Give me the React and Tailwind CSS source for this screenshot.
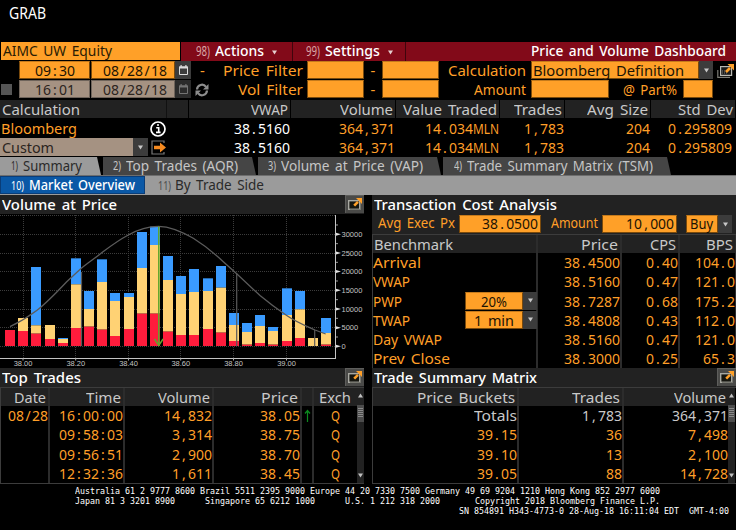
import React, { useLayoutEffect, useRef } from "react";

// Condensed text: the glyphs are narrowed so that the run fills a given width.
function T({ w, children, className = "" }) {
  const ref = useRef(null);
  useLayoutEffect(() => {
    const el = ref.current;
    el.style.transform = "none";
    el.style.transform = `scaleX(${w / el.getBoundingClientRect().width})`;
  }, [w, children]);
  return (
    <span className={`inline-block whitespace-pre text-left ${className}`} style={{ width: w }}>
      <span ref={ref} className="inline-block origin-left">{children}</span>
    </span>
  );
}

// Tabular figures: separators take a full digit cell, eight pixels each.
function N({ children, className = "" }) {
  return (
    <T w={children.length * 8} className={className}>
      {children.split(/([.,:/])/).map((p, i) =>
        p === "/" ? (
          <span key={i} className="px-[1.5px]">{p}</span>
        ) : /^[.,:]$/.test(p) ? (
          <span key={i} className="px-[2.28px]">{p}</span>
        ) : (
          p
        )
      )}
    </T>
  );
}

const Caret = ({ className = "" }) => (
  <svg width="7" height="5" viewBox="0 0 7 5" className={className}>
    <path d="M1 0.5h5L3.5 4.5z" fill="currentColor" />
  </svg>
);

const Drop = ({ className = "" }) => (
  <span className={`flex h-[18px] shrink-0 items-center justify-center bg-[#3c3c3c] text-[#c8c8c8] ${className}`}>
    <Caret />
  </span>
);

const Popout = () => (
  <svg width="19" height="18" viewBox="0 0 19 18" className="shrink-0">
    <rect width="19" height="18" fill="#4a4a48" />
    <path d="M0 0h19v1H1v17H0z" fill="#5e5e5c" />
    <rect x="3.7" y="5.7" width="11" height="8.6" fill="#16160f" stroke="#a9a9a2" strokeWidth="1.4" />
    <path d="M5 14.5h10.5V8" fill="none" stroke="#77776f" strokeWidth="1" />
    <path d="M9.2 10.6L13 6.8" stroke="#ffa028" strokeWidth="2.6" />
    <path d="M11 3h6v6z" fill="#ffa028" />
  </svg>
);

const Calendar = ({ dim }) => (
  <span className={`flex h-[18px] w-[16px] items-center justify-center ${dim ? "bg-[#2b2b2b] text-[#747474]" : "bg-[#3c3c3c] text-[#dcdcdc]"}`}>
    <svg width="11" height="12" viewBox="0 0 11 12">
      <path d="M1.5 3v7.5h8V3z" fill="none" stroke="currentColor" />
      <path d="M1 2.5h9v2H1zM2.5 1h1.2v2H2.5zM7.3 1h1.2v2H7.3z" fill="currentColor" />
    </svg>
  </span>
);

const Box = ({ className = "", children }) => (
  <span className={`block h-[18px] shrink-0 border border-[#7a4a0c] border-t-[#c47a1c] bg-[#ffa028] leading-[16px] text-[#1c1404] ${className}`}>
    {children}
  </span>
);

const summaryCols = "grid grid-cols-[167px_22px_102px_105px_104px_65px_86px_85px]";

function Header() {
  return (
    <div className="flex h-[19px] pl-px">
      <div className="h-[18px] w-[179px] bg-[#ffa028] pl-[2px] leading-[17px] text-[#2a1c04]">
        <T w={109}>AIMC UW Equity</T>
      </div>
      <div className="ml-px flex h-[19px] flex-1 bg-[#820a19] leading-[17px] text-white">
        <div className="flex w-[112px] border-r border-[#3f050c] pl-[15px]">
          <T w={14} className="text-[14px] text-[#d9a4a4]">98)</T>
          <T w={49} className="ml-[5px] font-medium">Actions</T>
          <Caret className="mt-[8px] ml-[7px] text-[#e6d0d0]" />
        </div>
        <div className="flex w-[113px] border-r border-[#3f050c] pl-[13px]">
          <T w={14} className="text-[14px] text-[#d9a4a4]">99)</T>
          <T w={55} className="ml-[5px] font-medium">Settings</T>
          <Caret className="mt-[8px] ml-[7px] text-[#e6d0d0]" />
        </div>
        <div className="flex-1 pr-[10px] text-right">
          <T w={195} className="font-medium">Price and Volume Dashboard</T>
        </div>
      </div>
    </div>
  );
}

function Filters() {
  return (
    <div className="h-[38px] leading-[18px] text-[#ff9f28]">
      <div className="flex h-[19px]">
        <Box className="ml-[19px] w-[71px] text-center"><N>09:30</N></Box>
        <Box className="ml-px w-[84px] pr-[7px] text-right"><N>08/28/18</N></Box>
        <Calendar />
        <span className="ml-[9px] w-[7px]">-</span>
        <span className="w-[96px] text-right"><T w={80}>Price Filter</T></span>
        <Box className="ml-[4px] w-[57px]" />
        <span className="w-[18px] text-center">-</span>
        <Box className="w-[57px]" />
        <span className="w-[87px] text-right"><T w={78}>Calculation</T></span>
        <Box className="ml-[5px] w-[168px] pl-px"><T w={151}>Bloomberg Definition</T></Box>
        <Drop className="w-[14px]" />
        <svg width="18" height="15" viewBox="0 0 18 15" className="ml-[4px] mt-[3px]">
          <rect x="3.6" y="2.6" width="11" height="8.8" fill="#1c1c1c" stroke="#b9b9b2" strokeWidth="1.2" />
          <path d="M0.8 6v7.4H13" fill="none" stroke="#7b7b75" strokeWidth="1.2" />
          <path d="M5 7h6M5 9h6" stroke="#777" strokeDasharray="1 1" />
          <path d="M9 8l4-4" stroke="#ffa028" strokeWidth="2.6" />
          <path d="M10.5 0H17v6.5z" fill="#ffa028" />
        </svg>
      </div>
      <div className="flex h-[19px]">
        <span className="mt-[4px] ml-px h-[11px] w-[11px] bg-[#555]" />
        <span className="ml-[7px] h-[18px] w-[71px] border border-[#6f645b] bg-[#a59282] text-center leading-[16px] text-[#2b241e]"><N>16:01</N></span>
        <span className="ml-px h-[18px] w-[84px] border border-[#6f645b] bg-[#a59282] pr-[7px] text-right leading-[16px] text-[#2b241e]"><N>08/28/18</N></span>
        <Calendar dim />
        <svg width="14" height="14" viewBox="0 0 14 14" className="ml-[4px] mt-[3px]">
          <path d="M2 6.5A5 5 0 0 1 11 3.8M12 7.5A5 5 0 0 1 3 10.2" fill="none" stroke="#8d8d8d" strokeWidth="2.2" />
          <path d="M13.5 1v5.5H8zM0.5 13V7.5H6z" fill="#8d8d8d" />
        </svg>
        <span className="w-[95px] pr-px text-right"><T w={65}>Vol Filter</T></span>
        <Box className="ml-[3px] w-[57px]" />
        <span className="w-[18px] text-center">-</span>
        <Box className="w-[57px]" />
        <span className="w-[87px] text-right"><T w={52}>Amount</T></span>
        <Box className="ml-[5px] w-[78px]" />
        <span className="w-[74px] pr-[6px] text-right"><T w={54}>@ Part%</T></span>
        <Box className="w-[30px]" />
      </div>
    </div>
  );
}

function Summary() {
  const head = [["VWAP", 37], ["Volume", 53], ["Value Traded", 94], ["Trades", 48], ["Avg Size", 61], ["Std Dev", 55]];
  return (
    <div>
      <div className={`${summaryCols} h-[20px] border-y border-black leading-[18px] text-[#c9c9c9]`}>
        <div className="border-r border-[#111] bg-[#222] pl-[2px]"><T w={78}>Calculation</T></div>
        <div className="border-r border-black bg-[#222]" />
        {head.map(([h, w]) => (
          <div key={h} className="border-r border-black bg-[#222] pr-[2px] text-right"><T w={w}>{h}</T></div>
        ))}
      </div>
      {["Bloomberg", "Custom"].map((name, i) => (
        <div key={name} className={`${summaryCols} h-[19px] text-right leading-[19px] text-[#ff9f28]`}>
          {i === 0 ? (
            <>
              <div className="pl-px text-left"><T w={76}>{name}</T></div>
              <div className="-ml-[17px]">
                <svg width="16" height="16" viewBox="0 0 16 16" className="mt-[2px]">
                  <circle cx="8" cy="8" r="7" fill="none" stroke="#fff" strokeWidth="1.7" />
                  <path d="M6.2 6.8h2.5V11.4M6 11.4h4.6M7 4h2" fill="none" stroke="#fff" strokeWidth="1.6" />
                </svg>
              </div>
            </>
          ) : (
            <>
              <div className="flex">
                <span className="h-[18px] w-[133px] bg-[#a59282] pl-[2px] text-left leading-[18px] text-[#2b241e]"><T w={52}>{name}</T></span>
                <Drop className="w-[15px] text-[#888]" />
              </div>
              <div className="-ml-[16px]">
                <svg width="16" height="15" viewBox="0 0 16 15" className="mt-[2px]">
                  <path d="M13 3V1H1v13h12v-2" fill="none" stroke="#777" strokeWidth="1.2" />
                  <path d="M3 5.8h6V2.6L15 7.5 9 12.4V9.2H3z" fill="#f58a20" />
                </svg>
              </div>
            </>
          )}
          <div className="pr-px text-white"><N>38.5160</N></div>
          <div className="pr-px"><N>364,371</N></div>
          <div className="pr-px"><N>14.034</N><T w={26}>MLN</T></div>
          <div className="pr-px"><N>1,783</N></div>
          <div className="pr-px"><N>204</N></div>
          <div className="pr-[4px]"><N>0.295809</N></div>
        </div>
      ))}
    </div>
  );
}

function Tabs() {
  const tabs = [
    ["1)", "Summary", 59, "w-[101px] bg-[#9b9b9b] text-[#2a2a2a]", "pl-[11px]", 7],
    ["2)", "Top Trades (AQR)", 112, "ml-[2px] w-[153px] bg-[#454545] text-[#c6c6c6]", "pl-[10px]", 8],
    ["3)", "Volume at Price (VAP)", 142, "ml-[2px] w-[183px] bg-[#454545] text-[#c6c6c6]", "pl-[10px]", 8],
    ["4)", "Trade Summary Matrix (TSM)", 186, "ml-[2px] w-[228px] bg-[#454545] text-[#c6c6c6]", "pl-[11px]", 8],
  ];
  return (
    <>
      <div className="flex h-[18px] leading-[18px]">
        {tabs.map(([n, t, w, c, p, nw]) => (
          <div key={n} className={`${c} ${p} flex [clip-path:polygon(0_0,calc(100%-4px)_0,100%_100%,0_100%)] text-[14px]`}>
            <T w={nw} className="text-[12px]">{n}</T>
            <T w={w} className="ml-[5px]">{t}</T>
          </div>
        ))}
      </div>
      <div className="flex h-[20px] border-t border-[#6e6e6e] bg-[#9b9b9b] text-[14px] leading-[18px] text-[#2a2a2a]">
        <div className="flex h-[18px] w-[145px] border border-[#0a3d78] bg-[#0a58a6] pl-[10px] leading-[16px] text-white">
          <T w={13} className="text-[13px]">10)</T>
          <T w={106} className="ml-[5px] font-medium">Market Overview</T>
        </div>
        <T w={13} className="ml-[13px] text-[13px] text-[#4a4a4a]">11)</T>
        <T w={89} className="ml-[4px]">By Trade Side</T>
      </div>
    </>
  );
}

// [top of blue, top of yellow, top of red] in thirds of a pixel, base at 453.
const bars = [
  [405, 405, 405], [369, 369, 408], [216, 391, 416], [390, 390, 432], [429, 432, 444],
  [190, 268, 399], [288, 342, 395], [193, 261, 404], [294, 318, 423], [294, 306, 402],
  [111, 219, 356], [95, 150, 356], [183, 255, 410], [243, 297, 420], [222, 291, 420],
  [250, 288, 402], [213, 278, 413], [354, 390, 438], [384, 411, 449], [360, 393, 444],
  [396, 408, 449], [280, 360, 438], [288, 343, 429], [429, 429, 453], [369, 414, 449],
];

function Chart() {
  const y = (v) => v / 3 - 19;
  const xs = [23, 75.7, 128.5, 180.7, 233.5, 286.5];
  const ys = [0, 5000, 10000, 15000, 20000, 25000, 30000];
  return (
    <svg width="364" height="154" viewBox="0 0 364 154" className="block bg-black">
      {ys.map((v) => (
        <line key={v} x1="0" x2="335" y1={Math.round(132 - (v * 18.67) / 5000) + 0.5} y2={Math.round(132 - (v * 18.67) / 5000) + 0.5} stroke="#3c3c3c" strokeDasharray="1 1" />
      ))}
      <line x1="0" x2="335" y1="1.5" y2="1.5" stroke="#3c3c3c" strokeDasharray="1 1" />
      {xs.map((x) => (
        <line key={x} x1={Math.floor(x) + 0.5} x2={Math.floor(x) + 0.5} y1="1" y2="144" stroke="#3c3c3c" strokeDasharray="1 1" />
      ))}
      {bars.map(([b, w, r], i) => {
        const x = Math.round(5 + i * 13.17);
        return (
          <g key={i}>
            <rect x={x} y={y(b)} width="10" height={(w - b) / 3} fill="#3a9bff" />
            <rect x={x} y={y(w)} width="10" height={(r - w) / 3} fill="#ffd274" />
            <rect x={x} y={y(r)} width="10" height={(453 - r) / 3} fill="#ff1c3c" />
          </g>
        );
      })}
      <path d="M81.5 58V132M236.7 59.5V132M314.7 116V132" stroke="#5a5a5a" strokeWidth="1.2" />
      <path
        d="M10 112.7C19 108.5 28 103 36.7 96.5C47 88.5 57 78 66.7 67.7L81 54.5C89 48 96 43.5 103.3 37.6C112 31 120 25.4 128.3 21C137 16 148 12.3 158.5 12.3C169 12.5 181 17 193.3 24.3C204 31 214 39 223.3 47.7L236.7 59.8L260 81.5C269 89 277 95 286.7 101.5C296 108 306 112 315 116L325.7 120"
        fill="none" stroke="#5c5c5c" strokeWidth="1.3"
      />
      <path d="M158.8 12.5V131M154.5 125l4.3 6.5 4.3-6.5" fill="none" stroke="#5fa62c" strokeWidth="1.5" />
      <path d="M335.5 1V144.5M0 144.5H336" fill="none" stroke="#c4c4c4" />
      {ys.map((v) => {
        const p = 132.3 - (v * 18.67) / 5000;
        return (
          <g key={v}>
            <path d={`M336 ${p - 1.5}l5 1.5-5 1.5z`} fill="#e0e0e0" />
            <path d={`M336 ${p - 9.3}h2`} stroke="#999" />
            <text x="341.5" y={p + 2.7} fontSize="7.5" fill="#c4c4c4" fontFamily="Liberation Sans, sans-serif">{v}</text>
          </g>
        );
      })}
      {["38.00", "38.20", "38.40", "38.60", "38.80", "39.00"].map((l, i) => (
        <g key={l}>
          <path d={`M${xs[i]} 144v2.5`} stroke="#aaa" />
          <text x={xs[i] - 9.3} y="151.6" fontSize="7.5" fill="#c4c4c4" fontFamily="Liberation Sans, sans-serif">{l}</text>
        </g>
      ))}
    </svg>
  );
}

const PanelTitle = ({ w, children, icon = true }) => (
  <div className="flex h-[19px] justify-between bg-[#222] pl-[2px] leading-[19px] text-white">
    <T w={w} className="font-medium">{children}</T>
    {icon && <Popout />}
  </div>
);

const Scroll = () => (
  <div className="flex w-[7px] shrink-0 flex-col items-center bg-[#222] text-[#c0c0c0]">
    <Caret className="mt-[5px] rotate-180" />
    <svg width="7" height="17" viewBox="0 0 7 17" className="mt-[7px]">
      <rect width="7" height="17" fill="#4c4c4c" />
      <path d="M1 3.5h5M1 5.5h5M1 7.5h5M1 9.5h5M1 11.5h5" stroke="#8a8a8a" />
    </svg>
    <Caret className="mt-auto mb-[5px]" />
  </div>
);

// A column: heading cell over its values, with a rule on the right side.
const Col = ({ head, hw, rows, className = "", pad = "pr-[2px]", rule = "border-r-2" }) => (
  <div className={`${rule} shrink-0 border-[#2c2c2c] text-right ${className}`}>
    <div className={`h-[18px] bg-[#222] leading-[18px] text-[#c9c9c9] ${pad}`}>{head && <T w={hw}>{head}</T>}</div>
    {rows.map((r, i) => (
      <div key={i} className="h-[19.3px] leading-[19px]">{typeof r === "string" ? <N>{r}</N> : r}</div>
    ))}
  </div>
);

function TopTrades() {
  return (
    <div>
      <PanelTitle w={79}>Top Trades</PanelTitle>
      <div className="flex h-[97px] border-t border-b border-l border-[#3c3c3c] text-[#ff9f28]">
        <Col className="w-[49px]" head="Date" hw={32} rows={["08/28"]} />
        <Col className="w-[75px]" head="Time" hw={35} rows={["16:00:00", "09:58:03", "09:56:51", "12:32:36"]} />
        <Col className="w-[89px]" head="Volume" hw={52} rows={["14,832", "3,314", "2,900", "1,611"]} />
        <Col className="w-[88px]" head="Price" hw={37} rows={["38.05", "38.75", "38.70", "38.45"]} />
        <Col
          className="w-[12px]"
          rows={[
            <svg key="up" width="7" height="14" viewBox="0 0 7 14" className="ml-[2px] mt-[3px]">
              <path d="M3.5 13V1.5M1 4.5l2.5-3 2.5 3" fill="none" stroke="#0c8a1e" strokeWidth="1.2" />
            </svg>,
          ]}
        />
        <Col className="w-[43px]" rule="border-r-0" pad="pr-[6px]" head="Exch" hw={32} rows={[0, 1, 2, 3].map((i) => <span key={i} className="mr-[17px]"><T w={9}>Q</T></span>)} />
        <Scroll />
      </div>
    </div>
  );
}

function Matrix() {
  return (
    <div>
      <PanelTitle w={163}>Trade Summary Matrix</PanelTitle>
      <div className="flex h-[97px] border-t border-b border-l border-[#3c3c3c] text-[#ff9f28]">
        <Col className="w-[146px]" head="Price Buckets" hw={98} rows={[<T key="t" w={43} className="text-[#c9c9c9]">Totals</T>, "39.15", "39.10", "39.05"]} />
        <Col className="w-[105px]" head="Trades" hw={48} rows={[<N key="a" className="text-[#c9c9c9]">1,783</N>, "36", "13", "88"]} />
        <Col className="w-[104px]" rule="border-r-0" head="Volume" hw={52} rows={[<N key="a" className="text-[#c9c9c9]">364,371</N>, "7,498", "2,100", "14,728"]} />
        <Scroll />
      </div>
    </div>
  );
}

function CostAnalysis() {
  const names = [["Arrival", 48], ["VWAP", 37], ["PWP", 29, "20%", 26], ["TWAP", 37, "1 min", 40], ["Day VWAP", 69], ["Prev Close", 77]];
  return (
    <div className="h-[173px]">
      <PanelTitle w={183} icon={false}>Transaction Cost Analysis</PanelTitle>
      <div className="flex h-[20px] bg-[#222] text-[14px] leading-[18px] text-[#ff9f28]">
        <T w={77} className="ml-[6px]">Avg Exec Px</T>
        <Box className="ml-[4px] mt-px h-[17px] w-[82px] pr-[2px] text-right leading-[14px]"><N>38.0500</N></Box>
        <T w={47} className="ml-[10px]">Amount</T>
        <Box className="ml-[4px] mt-px h-[17px] w-[75px] pr-[2px] text-right leading-[14px]"><N>10,000</N></Box>
        <Box className="ml-[9px] mt-px w-[32px] pl-[3px]"><T w={23}>Buy</T></Box>
        <Drop className="mt-px w-[14px]" />
      </div>
      <div className="flex h-[134px] border-t border-l border-[#3c3c3c] text-[#ff9f28]">
        <div className="w-[165px] shrink-0 border-r-2 border-[#2c2c2c]">
          <div className="h-[18px] bg-[#222] pl-px leading-[18px] text-[#c9c9c9]"><T w={79}>Benchmark</T></div>
          {names.map(([n, w, v, vw]) => (
            <div key={n} className="flex h-[19.3px] justify-between leading-[19px]">
              <T w={w}>{n}</T>
              {v && (
                <span className="-mr-px flex">
                  <Box className="w-[58px] text-center"><T w={vw}>{v}</T></Box>
                  <Drop className="w-[14px]" />
                </span>
              )}
            </div>
          ))}
        </div>
        <Col className="w-[84px]" head="Price" hw={37} rows={["38.4500", "38.5160", "38.7287", "38.4808", "38.5160", "38.3000"]} />
        <Col className="w-[58px]" head="CPS" hw={26} rows={["0.40", "0.47", "0.68", "0.43", "0.47", "0.25"]} />
        <Col className="w-[56px]" head="BPS" hw={27} rows={["104.0", "121.0", "175.2", "112.0", "121.0", "65.3"]} rule="border-r" />
      </div>
    </div>
  );
}

export default function App() {
  return (
    <div className="h-[530px] w-[736px] overflow-hidden bg-black font-['Noto_Sans','Open_Sans',sans-serif] text-[15px] [word-spacing:2px]">
      <div className="h-[42px] pl-[9px] pt-[3px] text-[16px] leading-[20px] text-white"><T w={37}>GRAB</T></div>
      <Header />
      <Filters />
      <Summary />
      <Tabs />
      <div className="grid h-[290px] grid-cols-[364px_364px] gap-x-[8px]">
        <div>
          <PanelTitle w={115}>Volume at Price</PanelTitle>
          <Chart />
          <TopTrades />
        </div>
        <div>
          <CostAnalysis />
          <Matrix />
        </div>
      </div>
      <div className="h-[34px] whitespace-pre pt-[2px] pl-[75px] font-['DejaVu_Sans_Mono',monospace] text-[8px] leading-[10px] text-white [word-spacing:0px]">
        <div className="flex"><T w={585}>Australia 61 2 9777 8600 Brazil 5511 2395 9000 Europe 44 20 7330 7500 Germany 49 69 9204 1210 Hong Kong 852 2977 6000</T></div>
        <div className="flex"><T w={585}>{"Japan 81 3 3201 8900      Singapore 65 6212 1000      U.S. 1 212 318 2000       Copyright 2018 Bloomberg Finance L.P."}</T></div>
        <div className="flex pl-[384px]"><T w={270}>{"SN 854891 H343-4773-0 28-Aug-18 16:11:04 EDT  GMT-4:00"}</T></div>
      </div>
    </div>
  );
}
